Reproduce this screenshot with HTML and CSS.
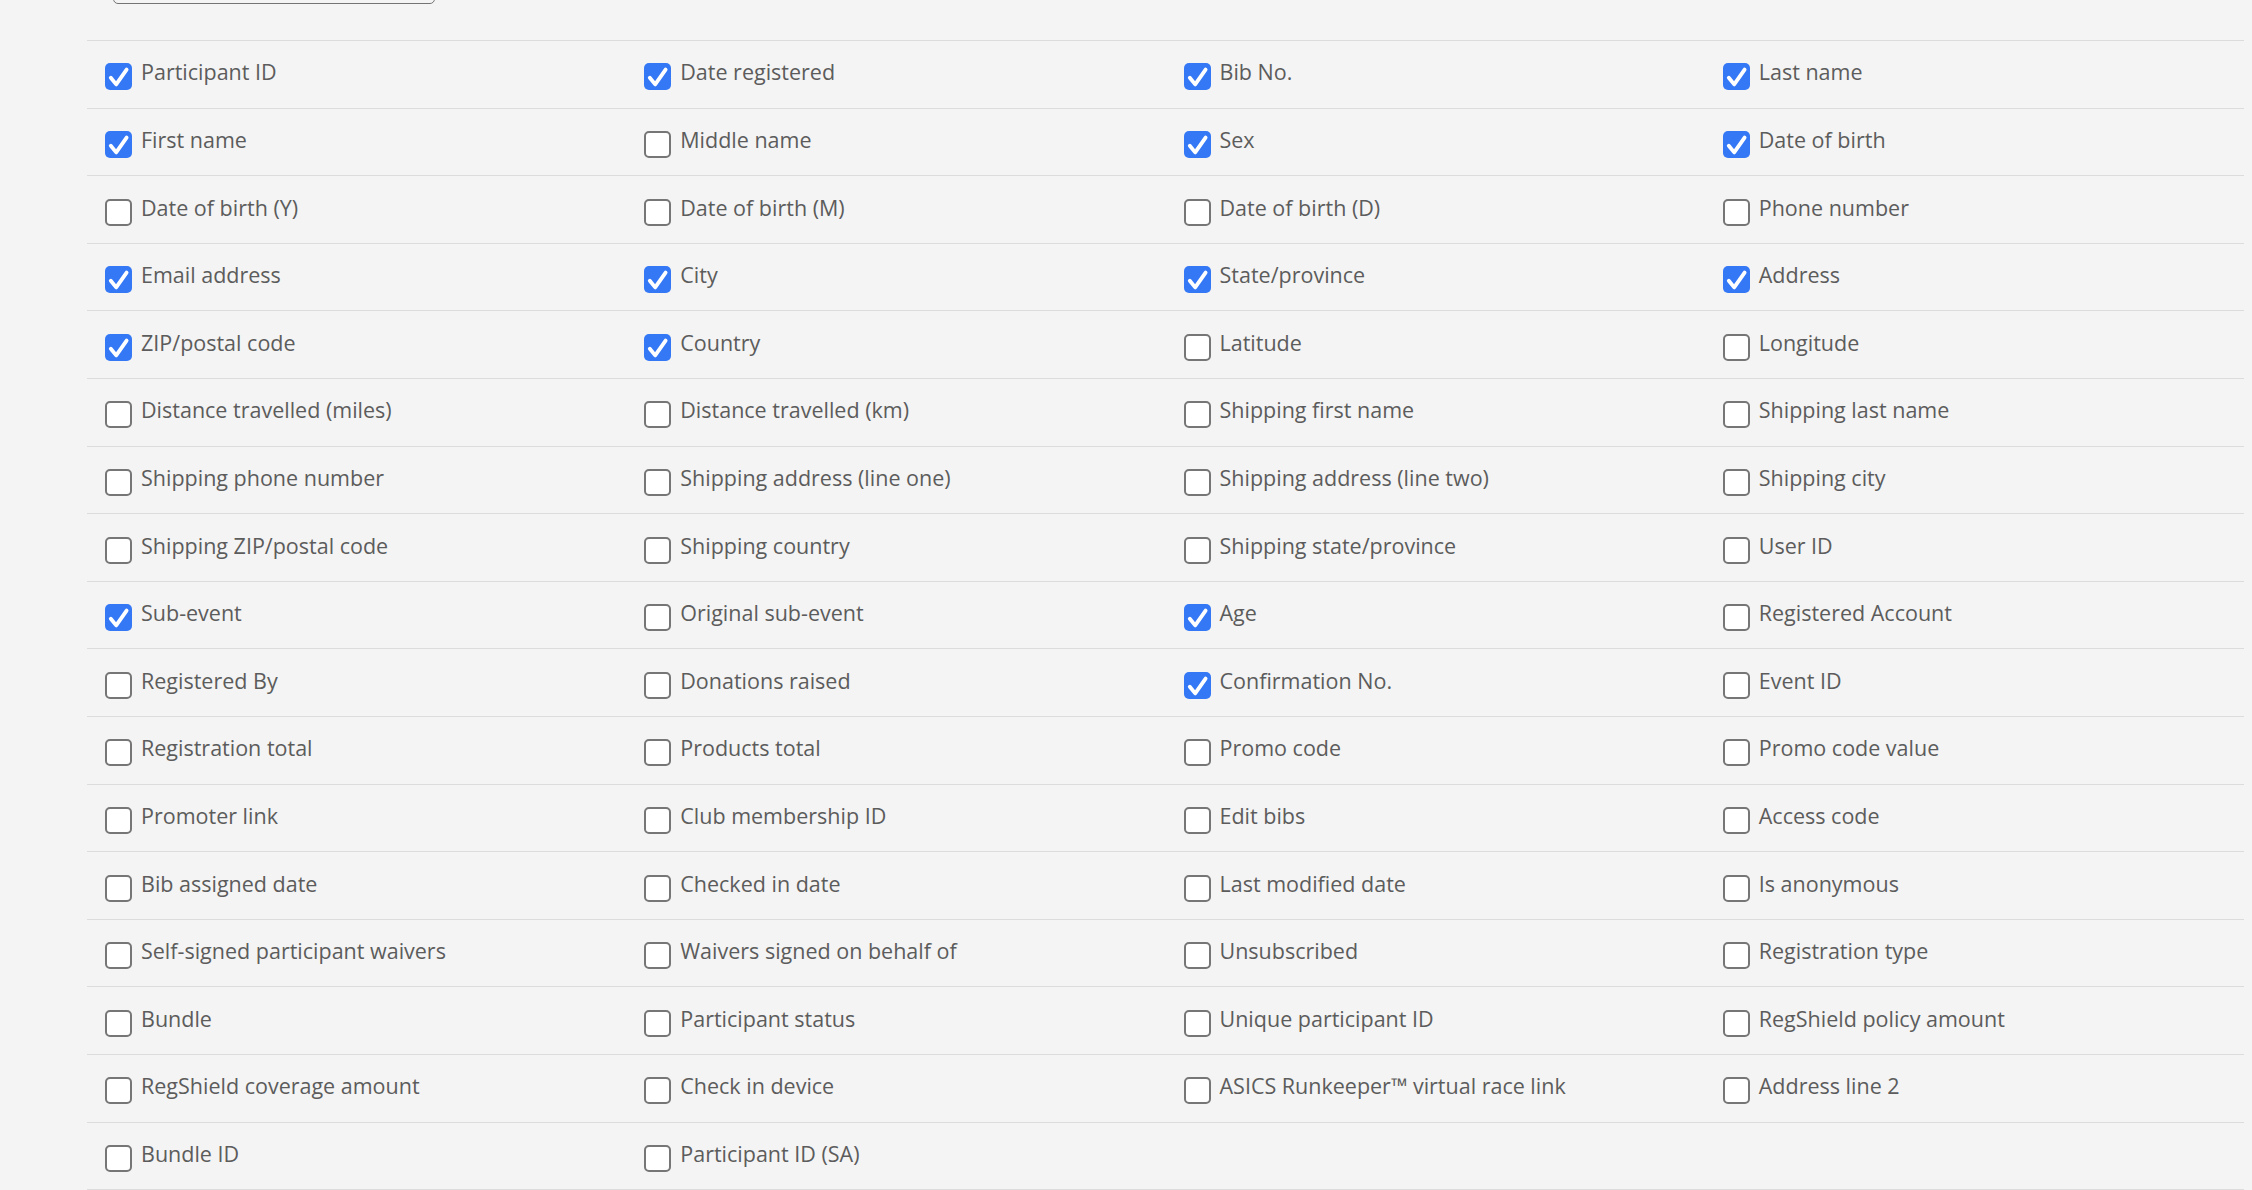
FILE: index.html
```html
<!DOCTYPE html>
<html lang="en">
<head>
<meta charset="utf-8">
<title>Export fields</title>
<link rel="stylesheet" href="styles.css">
</head>
<body>
<div class="page">
  <div class="search"></div>
  <div class="fields">
    <label class="field"><span class="box on"><svg viewBox="0 0 27 27"><polyline points="5.8,14.8 11.2,21.4 21.6,6.6"/></svg></span><span class="name">Participant ID</span></label>
    <label class="field"><span class="box on"><svg viewBox="0 0 27 27"><polyline points="5.8,14.8 11.2,21.4 21.6,6.6"/></svg></span><span class="name">Date registered</span></label>
    <label class="field"><span class="box on"><svg viewBox="0 0 27 27"><polyline points="5.8,14.8 11.2,21.4 21.6,6.6"/></svg></span><span class="name">Bib No.</span></label>
    <label class="field"><span class="box on"><svg viewBox="0 0 27 27"><polyline points="5.8,14.8 11.2,21.4 21.6,6.6"/></svg></span><span class="name">Last name</span></label>

    <label class="field"><span class="box on"><svg viewBox="0 0 27 27"><polyline points="5.8,14.8 11.2,21.4 21.6,6.6"/></svg></span><span class="name">First name</span></label>
    <label class="field"><span class="box"></span><span class="name">Middle name</span></label>
    <label class="field"><span class="box on"><svg viewBox="0 0 27 27"><polyline points="5.8,14.8 11.2,21.4 21.6,6.6"/></svg></span><span class="name">Sex</span></label>
    <label class="field"><span class="box on"><svg viewBox="0 0 27 27"><polyline points="5.8,14.8 11.2,21.4 21.6,6.6"/></svg></span><span class="name">Date of birth</span></label>

    <label class="field"><span class="box"></span><span class="name">Date of birth (Y)</span></label>
    <label class="field"><span class="box"></span><span class="name">Date of birth (M)</span></label>
    <label class="field"><span class="box"></span><span class="name">Date of birth (D)</span></label>
    <label class="field"><span class="box"></span><span class="name">Phone number</span></label>

    <label class="field"><span class="box on"><svg viewBox="0 0 27 27"><polyline points="5.8,14.8 11.2,21.4 21.6,6.6"/></svg></span><span class="name">Email address</span></label>
    <label class="field"><span class="box on"><svg viewBox="0 0 27 27"><polyline points="5.8,14.8 11.2,21.4 21.6,6.6"/></svg></span><span class="name">City</span></label>
    <label class="field"><span class="box on"><svg viewBox="0 0 27 27"><polyline points="5.8,14.8 11.2,21.4 21.6,6.6"/></svg></span><span class="name">State/province</span></label>
    <label class="field"><span class="box on"><svg viewBox="0 0 27 27"><polyline points="5.8,14.8 11.2,21.4 21.6,6.6"/></svg></span><span class="name">Address</span></label>

    <label class="field"><span class="box on"><svg viewBox="0 0 27 27"><polyline points="5.8,14.8 11.2,21.4 21.6,6.6"/></svg></span><span class="name">ZIP/postal code</span></label>
    <label class="field"><span class="box on"><svg viewBox="0 0 27 27"><polyline points="5.8,14.8 11.2,21.4 21.6,6.6"/></svg></span><span class="name">Country</span></label>
    <label class="field"><span class="box"></span><span class="name">Latitude</span></label>
    <label class="field"><span class="box"></span><span class="name">Longitude</span></label>

    <label class="field"><span class="box"></span><span class="name">Distance travelled (miles)</span></label>
    <label class="field"><span class="box"></span><span class="name">Distance travelled (km)</span></label>
    <label class="field"><span class="box"></span><span class="name">Shipping first name</span></label>
    <label class="field"><span class="box"></span><span class="name">Shipping last name</span></label>

    <label class="field"><span class="box"></span><span class="name">Shipping phone number</span></label>
    <label class="field"><span class="box"></span><span class="name">Shipping address (line one)</span></label>
    <label class="field"><span class="box"></span><span class="name">Shipping address (line two)</span></label>
    <label class="field"><span class="box"></span><span class="name">Shipping city</span></label>

    <label class="field"><span class="box"></span><span class="name">Shipping ZIP/postal code</span></label>
    <label class="field"><span class="box"></span><span class="name">Shipping country</span></label>
    <label class="field"><span class="box"></span><span class="name">Shipping state/province</span></label>
    <label class="field"><span class="box"></span><span class="name">User ID</span></label>

    <label class="field"><span class="box on"><svg viewBox="0 0 27 27"><polyline points="5.8,14.8 11.2,21.4 21.6,6.6"/></svg></span><span class="name">Sub-event</span></label>
    <label class="field"><span class="box"></span><span class="name">Original sub-event</span></label>
    <label class="field"><span class="box on"><svg viewBox="0 0 27 27"><polyline points="5.8,14.8 11.2,21.4 21.6,6.6"/></svg></span><span class="name">Age</span></label>
    <label class="field"><span class="box"></span><span class="name">Registered Account</span></label>

    <label class="field"><span class="box"></span><span class="name">Registered By</span></label>
    <label class="field"><span class="box"></span><span class="name">Donations raised</span></label>
    <label class="field"><span class="box on"><svg viewBox="0 0 27 27"><polyline points="5.8,14.8 11.2,21.4 21.6,6.6"/></svg></span><span class="name">Confirmation No.</span></label>
    <label class="field"><span class="box"></span><span class="name">Event ID</span></label>

    <label class="field"><span class="box"></span><span class="name">Registration total</span></label>
    <label class="field"><span class="box"></span><span class="name">Products total</span></label>
    <label class="field"><span class="box"></span><span class="name">Promo code</span></label>
    <label class="field"><span class="box"></span><span class="name">Promo code value</span></label>

    <label class="field"><span class="box"></span><span class="name">Promoter link</span></label>
    <label class="field"><span class="box"></span><span class="name">Club membership ID</span></label>
    <label class="field"><span class="box"></span><span class="name">Edit bibs</span></label>
    <label class="field"><span class="box"></span><span class="name">Access code</span></label>

    <label class="field"><span class="box"></span><span class="name">Bib assigned date</span></label>
    <label class="field"><span class="box"></span><span class="name">Checked in date</span></label>
    <label class="field"><span class="box"></span><span class="name">Last modified date</span></label>
    <label class="field"><span class="box"></span><span class="name">Is anonymous</span></label>

    <label class="field"><span class="box"></span><span class="name">Self-signed participant waivers</span></label>
    <label class="field"><span class="box"></span><span class="name">Waivers signed on behalf of</span></label>
    <label class="field"><span class="box"></span><span class="name">Unsubscribed</span></label>
    <label class="field"><span class="box"></span><span class="name">Registration type</span></label>

    <label class="field"><span class="box"></span><span class="name">Bundle</span></label>
    <label class="field"><span class="box"></span><span class="name">Participant status</span></label>
    <label class="field"><span class="box"></span><span class="name">Unique participant ID</span></label>
    <label class="field"><span class="box"></span><span class="name">RegShield policy amount</span></label>

    <label class="field"><span class="box"></span><span class="name">RegShield coverage amount</span></label>
    <label class="field"><span class="box"></span><span class="name">Check in device</span></label>
    <label class="field"><span class="box"></span><span class="name">ASICS Runkeeper™ virtual race link</span></label>
    <label class="field"><span class="box"></span><span class="name">Address line 2</span></label>

    <label class="field"><span class="box"></span><span class="name">Bundle ID</span></label>
    <label class="field"><span class="box"></span><span class="name">Participant ID (SA)</span></label>
    <div class="field"></div>
    <div class="field"></div>
  </div>
</div>
</body>
</html>
```

FILE: styles.css
```css
html, body {
  margin: 0;
  padding: 0;
  background: #f4f4f4;
}

body {
  font-family: "Open Sans", "Noto Sans", sans-serif;
  color: #5c5c5c;
  overflow: hidden;
}

.page {
  padding-left: 87px;
  width: 2157px;
}

.search {
  width: 322px;
  height: 40px;
  margin-top: -36px;
  margin-left: 26px;
  margin-bottom: 36px;
  border: 1px solid #747474;
  border-radius: 5px;
  box-sizing: border-box;
  background: #f4f4f4;
}

.fields {
  display: grid;
  grid-template-columns: repeat(4, 1fr);
  border-top: 1px solid #dcdcdc;
}

.field {
  box-sizing: border-box;
  height: 67.6px;
  border-bottom: 1px solid #dcdcdc;
  display: flex;
  align-items: flex-start;
  gap: 9px;
  padding: 17.4px 0 0 18px;
  font-size: 21.5px;
  line-height: 27px;
  cursor: pointer;
}

.box {
  flex: none;
  width: 27px;
  height: 27px;
  margin-top: 5.1px;
  box-sizing: border-box;
  border: 2px solid #767676;
  border-radius: 5px;
  background: #ffffff;
}

.box.on {
  border: none;
  background: #3478f6;
}

.box svg {
  display: block;
  width: 27px;
  height: 27px;
}

.box svg polyline {
  fill: none;
  stroke: #ffffff;
  stroke-width: 3.8;
  stroke-linecap: round;
  stroke-linejoin: round;
}

.name {
  white-space: nowrap;
}
```
